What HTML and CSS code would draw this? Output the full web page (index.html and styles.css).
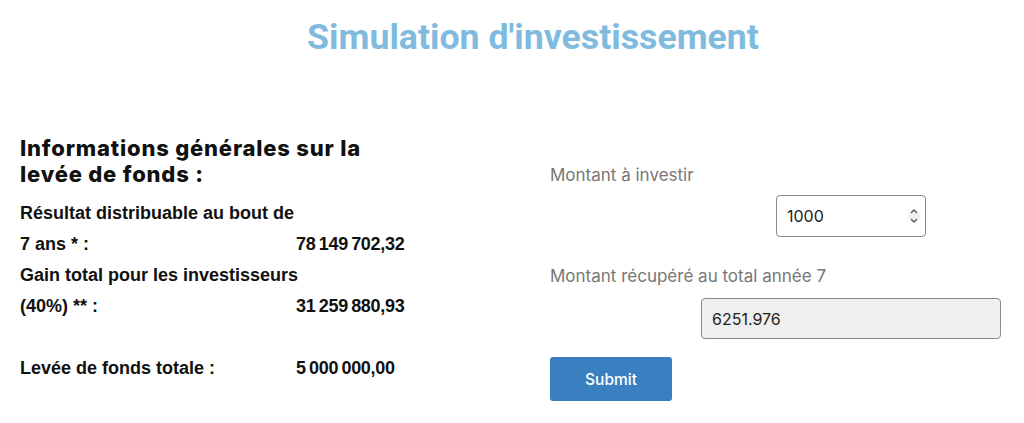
FILE: index.html
```html
<!DOCTYPE html>
<html lang="fr">
<head>
<meta charset="utf-8">
<title>Simulation d'investissement</title>
<link rel="stylesheet" href="styles.css">
</head>
<body>
<div class="page">
  <h1 class="title">Simulation d'investissement</h1>
  <div class="columns">
    <section class="info">
      <h2 class="info-title">Informations générales sur la<br>levée de fonds :</h2>
      <div class="rows">
        <div class="row">
          <div class="label">Résultat distribuable au bout de<br>7 ans * :</div>
          <div class="value">78&#8201;149&#8201;702,32</div>
        </div>
        <div class="row">
          <div class="label">Gain total pour les investisseurs<br>(40%) ** :</div>
          <div class="value">31&#8201;259&#8201;880,93</div>
        </div>
        <div class="row spaced">
          <div class="label">Levée de fonds totale :</div>
          <div class="value">5&#8201;000&#8201;000,00</div>
        </div>
      </div>
    </section>
    <form class="sim">
      <label class="field-label" for="amount">Montant à investir</label>
      <div class="field-row first">
        <div class="number-wrap">
          <input id="amount" class="input input-number" type="text" value="1000">
          <svg class="stepper" width="12" height="22" viewBox="0 0 12 22" aria-hidden="true">
            <circle cx="6" cy="11" r="6" fill="#f1f1f1"/>
            <path d="M3.5 7.5 L6 5 L8.5 7.5" fill="none" stroke="#555" stroke-width="1.4" stroke-linecap="round" stroke-linejoin="round"/>
            <path d="M3.5 14.5 L6 17 L8.5 14.5" fill="none" stroke="#555" stroke-width="1.4" stroke-linecap="round" stroke-linejoin="round"/>
          </svg>
        </div>
      </div>
      <label class="field-label second" for="result">Montant récupéré au total année 7</label>
      <div class="field-row result">
        <input id="result" class="input input-result" type="text" value="6251.976" readonly>
      </div>
      <button class="submit" type="button">Submit</button>
    </form>
  </div>
</div>
</body>
</html>
```

FILE: styles.css
```css
html, body {
  margin: 0;
  padding: 0;
  background: #ffffff;
  overflow: hidden;
}

.page {
  width: 1046px;
  padding-left: 20px;
  box-sizing: border-box;
}

.title {
  margin: 0;
  padding-top: 17px;
  height: 40px;
  line-height: 40px;
  text-align: center;
  font-family: Roboto, "Liberation Sans", sans-serif;
  font-weight: 700;
  font-size: 35.7px;
  color: #80bbdf;
}

.columns {
  display: grid;
  grid-template-columns: 530px 1fr;
  margin-top: 78px;
}

.info-title {
  margin: 0;
  font-family: "Inter", "Liberation Sans", sans-serif;
  font-weight: 800;
  font-size: 22px;
  line-height: 26px;
  color: #111111;
  letter-spacing: 0.8px;
}

.rows {
  margin-top: 11px;
  font-family: "Liberation Sans", Arial, sans-serif;
  font-weight: 700;
  font-size: 18px;
  line-height: 31px;
  color: #111111;
}

.row {
  display: grid;
  grid-template-columns: 276px 1fr;
}

.label {
  white-space: nowrap;
}

.row.spaced {
  margin-top: 31px;
}

.value {
  align-self: end;
  white-space: nowrap;
  letter-spacing: -0.3px;
}

.sim {
  display: flex;
  flex-direction: column;
  padding-top: 30px;
  font-family: "Inter", "Liberation Sans", sans-serif;
}

.field-label {
  font-size: 17px;
  line-height: 20px;
  color: #777777;
}

.field-label.second {
  margin-top: 29px;
}

.field-row {
  width: 300px;
  margin-left: 151px;
  display: flex;
  justify-content: center;
}

.field-row.first {
  margin-top: 10px;
}

.field-row.result {
  margin-top: 12px;
}

.number-wrap {
  position: relative;
  width: 150px;
}

.input {
  box-sizing: border-box;
  height: 42px;
  border: 1px solid #8a8a8a;
  border-radius: 4px;
  padding: 0 10px;
  font-family: "Inter", "Liberation Sans", sans-serif;
  font-size: 16px;
  color: #222222;
  outline: none;
}

.input-number {
  width: 150px;
  background: #ffffff;
}

.stepper {
  position: absolute;
  right: 6px;
  top: 10px;
}

.input-result {
  width: 300px;
  background: #efefef;
  height: 41px;
}

.submit {
  margin-top: 18px;
  width: 122px;
  height: 44px;
  border: none;
  border-radius: 3px;
  background: #3a7fbf;
  color: #ffffff;
  font-family: "Inter", "Liberation Sans", sans-serif;
  font-size: 15.5px;
  font-weight: 500;
  cursor: pointer;
}
```
